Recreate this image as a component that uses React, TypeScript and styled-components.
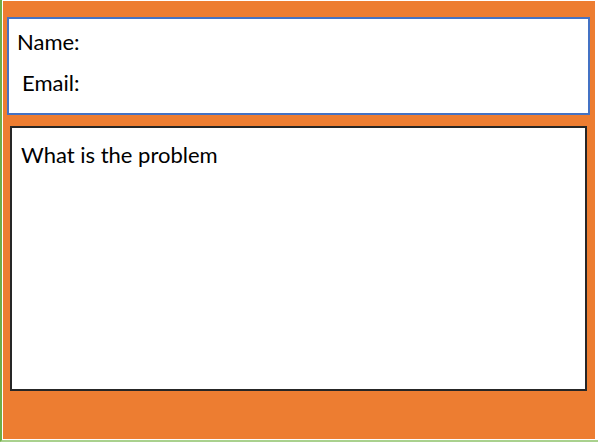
import React from "react";
import styled, { createGlobalStyle } from "styled-components";

const Global = createGlobalStyle`
  html, body { margin: 0; padding: 0; background: #ffffff; }
  body { font-family: Lato, "Open Sans", sans-serif; }
`;

const Frame = styled.div`
  width: 598px;
  height: 442px;
  box-sizing: border-box;
  border-left: 2px solid #70ad47;
  border-bottom: 2px solid #a9d18e;
  padding: 1px 3px 1px 1px;
  background: #ffffff;
  display: flex;
`;

const Panel = styled.div`
  flex: 1;
  background: #ed7d31;
  display: flex;
  flex-direction: column;
  padding: 16px 5px 0 4px;
  gap: 11px;
`;

const ContactBox = styled.div`
  height: 98px;
  box-sizing: border-box;
  background: #ffffff;
  border: 2px solid #4472c4;
  padding: 10px 8px 0 8px;
  display: flex;
  flex-direction: column;
  gap: 15px;
`;

const Field = styled.div<{ $indent?: number }>`
  font-size: 22px;
  line-height: 26px;
  color: #000000;
  padding-left: ${(p) => p.$indent ?? 0}px;
`;

const ProblemBox = styled.div`
  margin: 0 3px 0 3px;
  height: 265px;
  box-sizing: border-box;
  background: #ffffff;
  border: 2px solid #262626;
  padding: 14px 9px;
  font-size: 22px;
  line-height: 26px;
  color: #000000;
`;

export default function App() {
  return (
    <>
      <Global />
      <Frame>
        <Panel>
          <ContactBox>
            <Field>Name:</Field>
            <Field $indent={5}>Email:</Field>
          </ContactBox>
          <ProblemBox>What is the problem</ProblemBox>
        </Panel>
      </Frame>
    </>
  );
}
